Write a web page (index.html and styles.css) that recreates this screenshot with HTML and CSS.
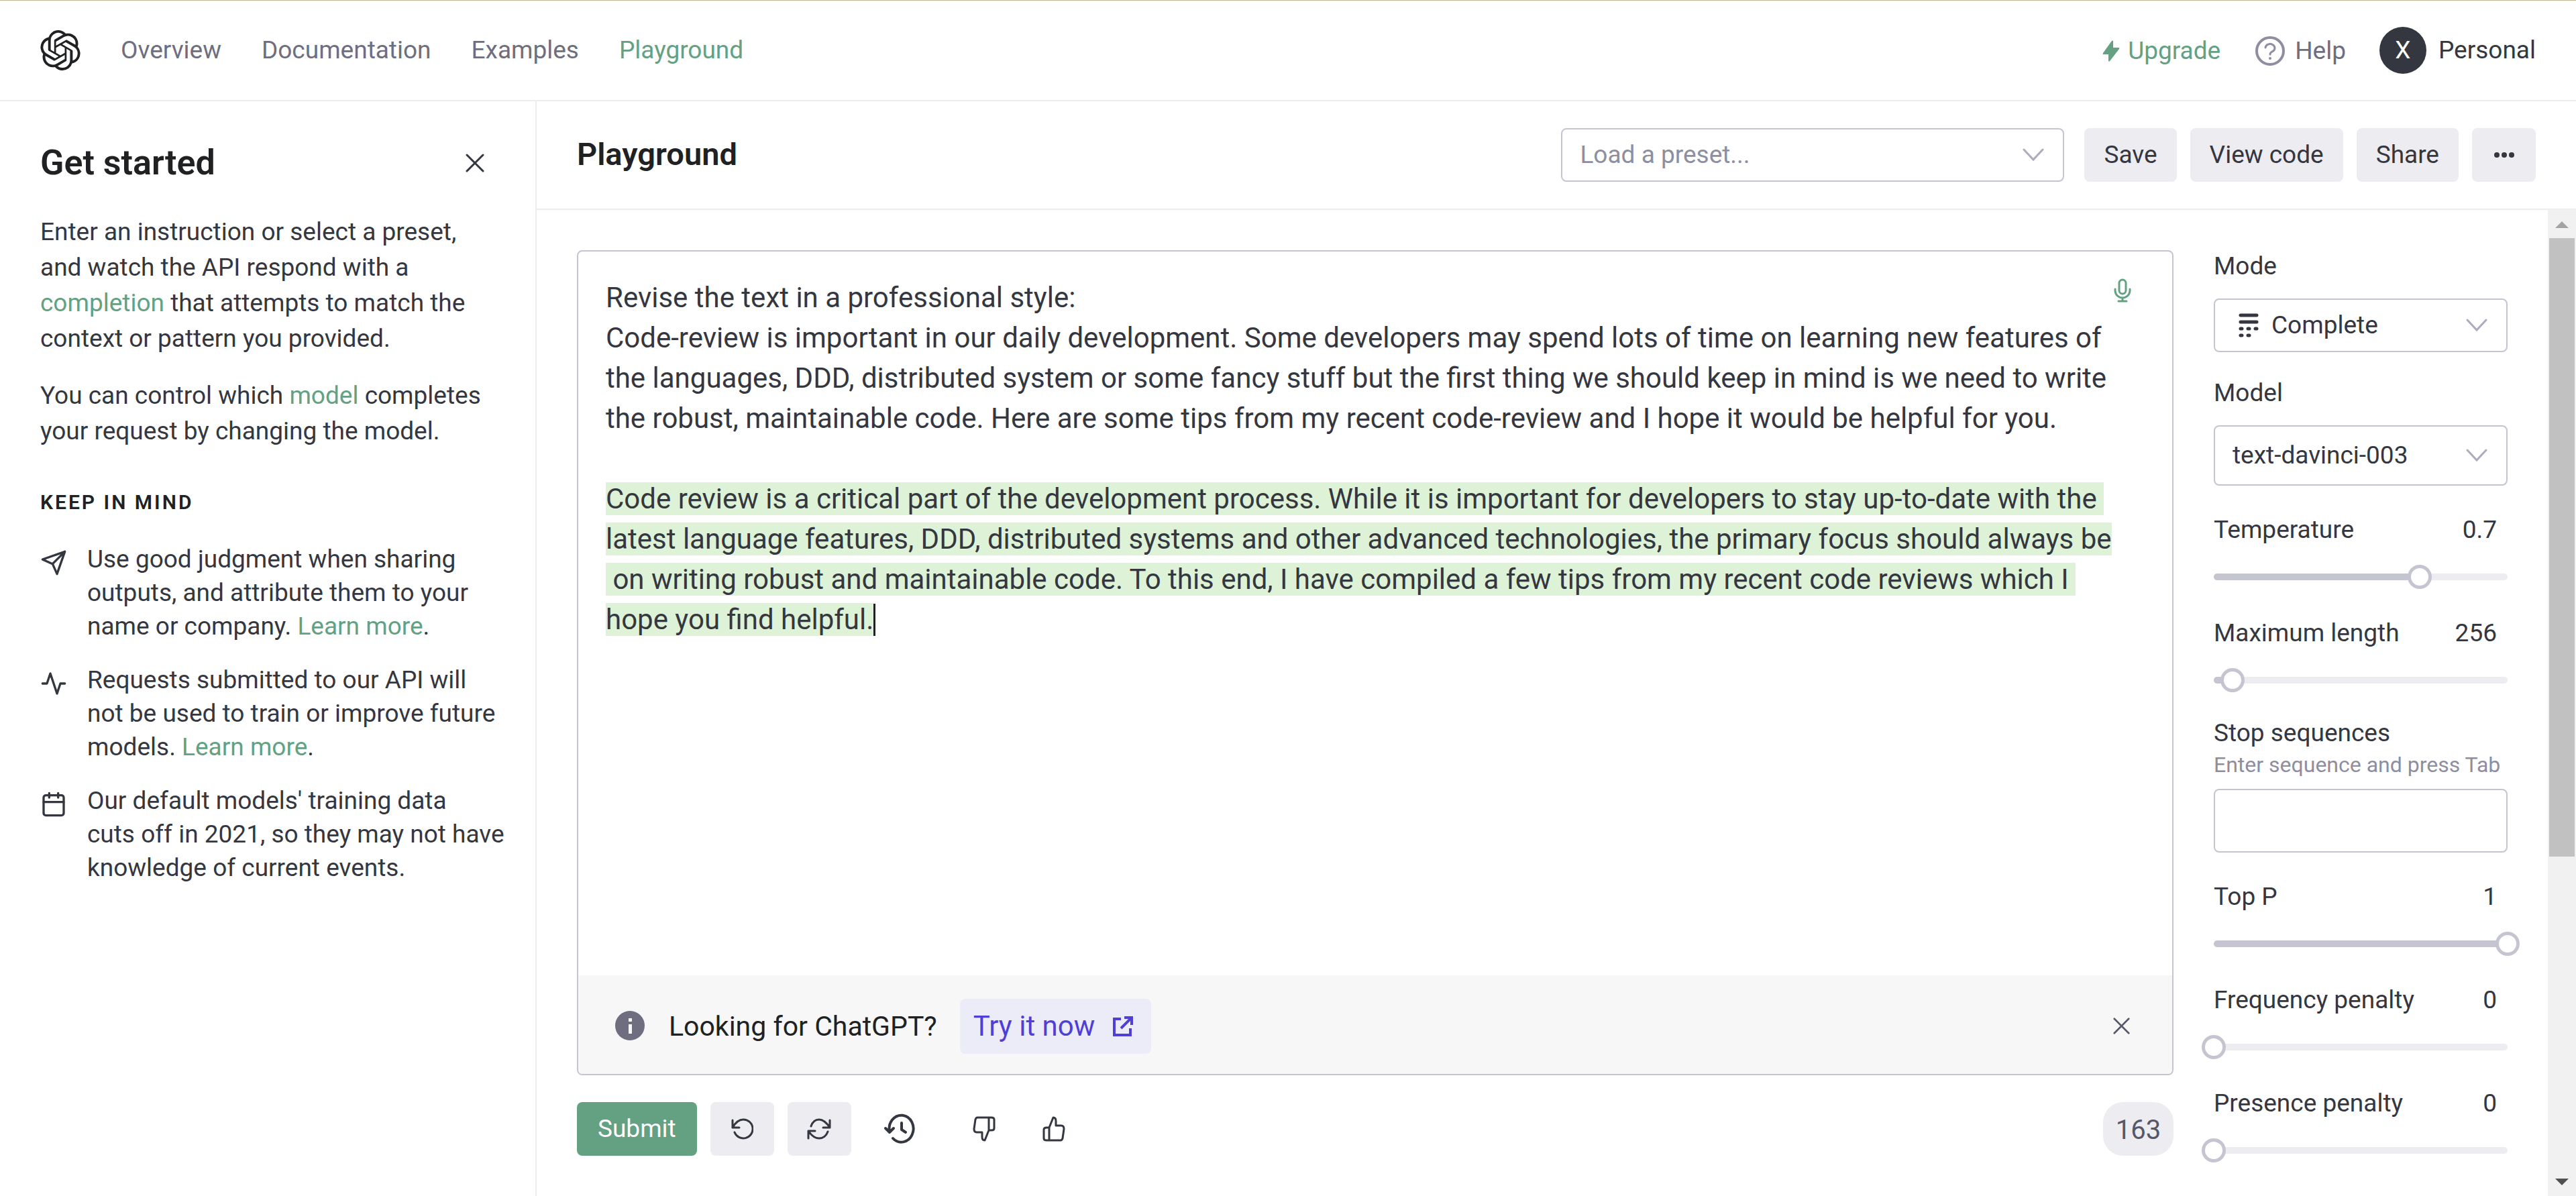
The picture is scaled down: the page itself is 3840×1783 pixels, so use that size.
FILE: index.html
```html
<!DOCTYPE html>
<html lang="en">
<head>
<meta charset="utf-8">
<title>Playground</title>
<link rel="stylesheet" href="styles.css">
</head>
<body>
<div class="app">
  <header class="topbar">
    <a class="logo" href="#" aria-label="Home"><svg viewBox="0 0 24 24" fill="currentColor"><path d="M22.2819 9.8211a5.9847 5.9847 0 0 0-.5157-4.9108 6.0462 6.0462 0 0 0-6.5098-2.9A6.0651 6.0651 0 0 0 4.9807 4.1818a5.9847 5.9847 0 0 0-3.9977 2.9 6.0462 6.0462 0 0 0 .7427 7.0966 5.98 5.98 0 0 0 .511 4.9107 6.051 6.051 0 0 0 6.5146 2.9001A5.9847 5.9847 0 0 0 13.2599 24a6.0557 6.0557 0 0 0 5.7718-4.2058 5.9894 5.9894 0 0 0 3.9977-2.9001 6.0557 6.0557 0 0 0-.7475-7.0729zm-9.022 12.6081a4.4755 4.4755 0 0 1-2.8764-1.0408l.1419-.0804 4.7783-2.7582a.7948.7948 0 0 0 .3927-.6813v-6.7369l2.02 1.1686a.071.071 0 0 1 .038.052v5.5826a4.504 4.504 0 0 1-4.4945 4.4944zm-9.6607-4.1254a4.4708 4.4708 0 0 1-.5346-3.0137l.142.0852 4.783 2.7582a.7712.7712 0 0 0 .7806 0l5.8428-3.3685v2.3324a.0804.0804 0 0 1-.0332.0615L9.74 19.9502a4.4992 4.4992 0 0 1-6.1408-1.6464zM2.3408 7.8956a4.485 4.485 0 0 1 2.3655-1.9728V11.6a.7664.7664 0 0 0 .3879.6765l5.8144 3.3543-2.0201 1.1685a.0757.0757 0 0 1-.071 0l-4.8303-2.7865A4.504 4.504 0 0 1 2.3408 7.872zm16.5963 3.8558L13.1038 8.364 15.1192 7.2a.0757.0757 0 0 1 .071 0l4.8303 2.7913a4.4944 4.4944 0 0 1-.6765 8.1042v-5.6772a.79.79 0 0 0-.407-.667zm2.0107-3.0231l-.142-.0852-4.7735-2.7818a.7759.7759 0 0 0-.7854 0L9.409 9.2297V6.8974a.0662.0662 0 0 1 .0284-.0615l4.8303-2.7866a4.4992 4.4992 0 0 1 6.6802 4.66zM8.3065 12.863l-2.02-1.1638a.0804.0804 0 0 1-.038-.0567V6.0742a4.4992 4.4992 0 0 1 7.3757-3.4537l-.142.0805L8.704 5.459a.7948.7948 0 0 0-.3927.6813zm1.0976-2.3654l2.602-1.4998 2.6069 1.4998v2.9994l-2.5974 1.4997-2.6067-1.4997Z"/></svg></a>
    <nav class="nav">
      <a href="#">Overview</a>
      <a href="#">Documentation</a>
      <a href="#">Examples</a>
      <a class="active" href="#">Playground</a>
    </nav>
    <div class="account">
      <a class="upgrade" href="#"><svg viewBox="0 0 26 32" fill="currentColor"><path d="M14 1 1 19q-1 2 1 2h7v10q1 1 2 0L25 13q1-2-1-2h-8V1q-1-1-2 0z"/></svg>Upgrade</a>
      <a class="help" href="#"><svg viewBox="0 0 44 44" fill="none" stroke="currentColor" stroke-width="4" stroke-linecap="round"><circle cx="22" cy="22" r="20"/><path d="M15 17a7 6 0 1 1 10 6c-2 1-3 2-3 4" stroke-width="3"/><circle cx="22" cy="33" r="2" fill="currentColor" stroke="none"/></svg>Help</a>
      <button class="profile"><span class="avatar">X</span>Personal</button>
    </div>
  </header>

  <div class="workspace">
    <aside class="sidebar">
      <div class="sidebar-head">
        <h2>Get started</h2>
        <button class="plain" aria-label="Close"><svg class="close" viewBox="0 0 28 28"><path d="M2 2l24 24M26 2 2 26"/></svg></button>
      </div>
      <p>Enter an instruction or select a preset,<br>and watch the API respond with a<br><a href="#">completion</a> that attempts to match the<br>context or pattern you provided.</p>
      <p>You can control which <a href="#">model</a> completes<br>your request by changing the model.</p>
      <h3>KEEP IN MIND</h3>
      <ul class="tips">
        <li><svg class="feather" viewBox="0 0 24 24"><path d="M22 2 11 13M22 2l-7 20-4-9-9-4z"/></svg><span>Use good judgment when sharing<br>outputs, and attribute them to your<br>name or company. <a href="#">Learn more</a>.</span></li>
        <li><svg class="feather" viewBox="0 0 24 24"><path d="M22 12h-4l-3 9L9 3l-3 9H2"/></svg><span>Requests submitted to our API will<br>not be used to train or improve future<br>models. <a href="#">Learn more</a>.</span></li>
        <li><svg class="feather" viewBox="0 0 24 24"><rect x="3" y="4" width="18" height="18" rx="2"/><path d="M16 2v4M8 2v4M3 10h18"/></svg><span>Our default models' training data<br>cuts off in 2021, so they may not have<br>knowledge of current events.</span></li>
      </ul>
    </aside>

    <main class="main">
      <div class="toolbar">
        <h1>Playground</h1>
        <div class="select preset">
          <select aria-label="Preset"><option>Load a preset...</option></select>
          <svg class="chevron" viewBox="0 0 32 20"><path d="M2 2l14 15L30 2"/></svg>
        </div>
        <div class="actions">
          <button class="btn">Save</button>
          <button class="btn">View code</button>
          <button class="btn">Share</button>
          <button class="btn icon-btn" aria-label="More"><svg width="30" height="8" viewBox="0 0 30 8" fill="currentColor"><circle cx="4" cy="4" r="4"/><circle cx="15" cy="4" r="4"/><circle cx="26" cy="4" r="4"/></svg></button>
        </div>
      </div>

      <div class="body">
        <div class="content">
          <section class="left">
            <div class="editor">
              <div class="prompt" role="textbox" aria-multiline="true" aria-label="Prompt">Revise the text in a professional style:
Code-review is important in our daily development. Some developers may spend lots of time on learning new features of
the languages, DDD, distributed system or some fancy stuff but the first thing we should keep in mind is we need to write
the robust, maintainable code. Here are some tips from my recent code-review and I hope it would be helpful for you.

<mark>Code review is a critical part of the development process. While it is important for developers to stay up-to-date with the 
latest language features, DDD, distributed systems and other advanced technologies, the primary focus should always be
 on writing robust and maintainable code. To this end, I have compiled a few tips from my recent code reviews which I 
hope you find helpful.</mark><span class="caret"></span></div>
              <button class="plain mic" aria-label="Record"><svg width="26" height="36" viewBox="0 0 26 36" fill="none" stroke="currentColor" stroke-width="3" stroke-linecap="round"><rect x="8" y="2" width="10" height="21" rx="5"/><path d="M2 16v2a11 11 0 0 0 22 0v-2M13 29v5M7 34h12"/></svg></button>
              <div class="banner">
                <svg class="info" viewBox="0 0 45 45"><circle cx="22" cy="22" r="22" fill="#6e6e80"/><path d="M20 20h5v14h-5zM20 11h5v5h-5z" fill="#f7f7f8"/></svg>
                <span class="banner-text">Looking for ChatGPT?</span>
                <a class="try" href="#">Try it now <svg width="32" height="32" viewBox="0 0 32 32" fill="none" stroke="currentColor" stroke-width="4"><path d="M13 5H3v24h24V19M18 3h11v11M28 4 13 19"/></svg></a>
                <button class="plain dismiss" aria-label="Dismiss"><svg class="close" viewBox="0 0 28 28"><path d="M2 2l24 24M26 2 2 26"/></svg></button>
              </div>
            </div>
            <div class="footer">
              <button class="btn submit">Submit</button>
              <button class="btn icon-btn" aria-label="Undo"><svg class="line" width="34" height="34" viewBox="0 0 34 34"><path d="M3 4v11h10M3 15C7 8 12 3 19 3a14 14 0 1 1-13 19"/></svg></button>
              <button class="btn icon-btn" aria-label="Regenerate"><svg class="line" width="36" height="34" viewBox="0 0 36 34"><path d="M34 4v11H24M2 31V20h10M6 13C8 7 12 3 18 3c7 0 12 6 16 12M31 21c-2 6-7 10-13 10-7 0-12-5-16-11"/></svg></button>
              <button class="plain history" aria-label="History"><svg class="line bold" width="46" height="46" viewBox="0 0 46 46"><path d="M2 22l6 6 6-6M8 27A18 20 0 1 1 13 37M26 14v10l6 4"/></svg></button>
              <button class="plain thumb-down" aria-label="Bad"><svg class="line" width="34" height="38" viewBox="0 0 34 38"><path d="M24 2H7Q5 2 4 5L2 19q0 5 4 5h8v7q0 5 4 5l6-15zM24 2h4q4 0 4 3v13q0 3-4 3h-4"/></svg></button>
              <button class="plain" aria-label="Good"><svg class="line" width="34" height="38" viewBox="0 0 34 38"><path d="M10 36h17q2 0 3-3l2-14q0-5-4-5h-8V7q0-5-4-5l-6 15zM10 36H6q-4 0-4-3V20q0-3 4-3h4"/></svg></button>
              <span class="count">163</span>
            </div>
          </section>

          <form class="settings">
            <div class="control">
              <label for="mode">Mode</label>
              <div class="select mode">
                <select id="mode"><option>Complete</option></select>
                <svg class="mode-icon" viewBox="0 0 30 36" fill="none" stroke="currentColor" stroke-width="5" stroke-linecap="round"><path d="M3 3h24M3 13h24M3 23h2M14 23h2M25 23h2M3 33h2M14 33h2"/></svg>
                <svg class="chevron" viewBox="0 0 32 20"><path d="M2 2l14 15L30 2"/></svg>
              </div>
            </div>
            <div class="control">
              <label for="model">Model</label>
              <div class="select tall">
                <select id="model"><option>text-davinci-003</option></select>
                <svg class="chevron" viewBox="0 0 32 20"><path d="M2 2l14 15L30 2"/></svg>
              </div>
            </div>
            <div class="control ranged">
              <div class="row"><label for="temp">Temperature</label><output>0.7</output></div>
              <div class="slider"><span class="bar"><span class="fill" style="width:70%"></span></span><input id="temp" type="range" min="0" max="1" step="0.01" value="0.7"></div>
            </div>
            <div class="control ranged">
              <div class="row"><label for="len">Maximum length</label><output>256</output></div>
              <div class="slider"><span class="bar"><span class="fill" style="width:6.4%"></span></span><input id="len" type="range" min="0" max="4000" value="256"></div>
            </div>
            <div class="control">
              <label for="stop">Stop sequences</label>
              <div class="hint">Enter sequence and press Tab</div>
              <input class="text" id="stop" type="text">
            </div>
            <div class="control ranged">
              <div class="row"><label for="topp">Top P</label><output>1</output></div>
              <div class="slider"><span class="bar"><span class="fill" style="width:100%"></span></span><input id="topp" type="range" min="0" max="1" step="0.01" value="1"></div>
            </div>
            <div class="control ranged">
              <div class="row"><label for="freq">Frequency penalty</label><output>0</output></div>
              <div class="slider"><span class="bar"><span class="fill" style="width:0%"></span></span><input id="freq" type="range" min="0" max="2" step="0.01" value="0"></div>
            </div>
            <div class="control ranged">
              <div class="row"><label for="pres">Presence penalty</label><output>0</output></div>
              <div class="slider"><span class="bar"><span class="fill" style="width:0%"></span></span><input id="pres" type="range" min="0" max="2" step="0.01" value="0"></div>
            </div>
          </form>
        </div>
        <div class="scrollbar" aria-hidden="true">
          <svg class="arrow" viewBox="0 0 20 10" fill="#a3a3a3"><path d="M0 10 10 0l10 10z"/></svg>
          <div class="rail"><div class="grip"></div></div>
          <svg class="arrow" viewBox="0 0 20 10" fill="#505050"><path d="M0 0l10 10L20 0z"/></svg>
        </div>
      </div>
    </main>
  </div>
</div>
</body>
</html>
```

FILE: styles.css
```css
* { box-sizing: border-box; }

:root {
  --text: #353740;
  --heading: #202123;
  --muted: #6e6e80;
  --soft: #8e8ea0;
  --border: #c5c5d2;
  --line: #ececf1;
  --green: #63a182;
}

body {
  margin: 0;
  background: #fff;
  color: var(--text);
  font: 37px/50px Roboto, "Liberation Sans", sans-serif;
}

a { color: var(--green); text-decoration: none; }
button, select, input { font: inherit; color: inherit; margin: 0; }
button { cursor: pointer; border: 0; padding: 0; background: none; }
svg { display: block; flex: none; }
h1, h2, h3, p, ul { margin: 0; padding: 0; }

.app { display: flex; flex-direction: column; height: 100vh; border-top: 1px solid #c5b495; }

.topbar { display: flex; align-items: center; height: 150px; flex: none; padding: 0 60px; border-bottom: 2px solid var(--line); }
.logo { color: var(--heading); margin-right: 60px; }
.logo svg { width: 60px; height: 60px; }
.nav { display: flex; gap: 60px; }
.nav a { color: var(--muted); }
.nav .active { color: var(--green); }
.account { display: flex; align-items: center; margin-left: auto; }
.upgrade, .help, .profile { display: flex; align-items: center; }
.upgrade { gap: 12px; margin-right: 52px; padding-top: 2px; }
.upgrade svg { width: 26px; height: 32px; }
.help { gap: 15px; margin-right: 50px; padding-top: 2px; color: var(--muted); }
.help svg { width: 44px; height: 44px; color: var(--soft); }
.profile { gap: 18px; }
.avatar { width: 70px; height: 70px; border-radius: 50%; background: #353740; color: #fff; line-height: 70px; text-align: center; }

.workspace { display: flex; flex: 1; min-height: 0; }

.sidebar { width: 800px; flex: none; padding: 60px 60px 0; border-right: 2px solid var(--line); }
.sidebar-head { display: flex; align-items: center; justify-content: space-between; margin-bottom: 44px; padding-right: 16px; }
h1, h2, h3 { color: var(--heading); font-weight: 600; }
h2 { font-size: 52px; line-height: 64px; }
h1 { font-size: 47px; line-height: 60px; padding-bottom: 2px; }
h3 { font-size: 30px; line-height: 40px; letter-spacing: 3px; margin: 60px 0 40px; }
.sidebar p { line-height: 53px; margin-bottom: 32px; }
.tips { list-style: none; display: grid; gap: 30px; white-space: nowrap; }
.tips li { display: flex; gap: 30px; }
.feather { width: 40px; height: 40px; margin-top: 10px; fill: none; stroke: currentColor; stroke-width: 2; stroke-linecap: round; stroke-linejoin: round; }
.close { width: 28px; height: 28px; fill: none; stroke: currentColor; stroke-width: 3; stroke-linecap: round; }

.main { flex: 1; min-width: 0; display: flex; flex-direction: column; }
.toolbar { display: flex; align-items: center; height: 162px; flex: none; padding: 0 60px; border-bottom: 2px solid var(--line); }
.actions { display: flex; gap: 20px; margin-left: 30px; }
.btn { height: 80px; padding: 0 29px; border-radius: 8px; background: var(--line); }
.icon-btn { width: 95px; padding: 0; display: flex; align-items: center; justify-content: center; }

.select { display: grid; align-items: center; height: 80px; }
.select > * { grid-area: 1 / 1; }
.select select, .text { width: 100%; height: 100%; border: 2px solid var(--border); border-radius: 8px; background: #fff; appearance: none; padding: 0 26px; }
.preset { width: 750px; margin-left: auto; }
.preset select { color: var(--soft); }
.chevron { width: 32px; height: 20px; justify-self: end; margin-right: 30px; fill: none; stroke: #acacbe; stroke-width: 3; stroke-linecap: round; pointer-events: none; }
.tall { height: 90px; }
.mode select { padding-left: 84px; }
.mode-icon { width: 30px; height: 36px; margin-left: 37px; pointer-events: none; }

.body { display: flex; flex: 1; min-height: 0; }
.content { flex: 1; min-width: 0; display: flex; gap: 60px; padding: 60px; overflow: hidden; }
.left { flex: 1; min-width: 0; display: flex; flex-direction: column; gap: 40px; }
.editor { flex: 1; position: relative; display: flex; flex-direction: column; border: 2px solid var(--border); border-radius: 8px; overflow: hidden; }
.prompt { flex: 1; padding: 39px 41px; font-size: 42px; line-height: 60px; white-space: pre; }
mark { background: #ddf2d6; color: inherit; }
.caret { display: inline-block; width: 3px; height: 48px; background: var(--heading); vertical-align: -10px; }
.mic { position: absolute; top: 40px; right: 61px; color: var(--green); }

.banner { display: flex; align-items: center; height: 147px; padding: 4px 63px 0 55px; background: #f7f7f8; color: var(--heading); font-size: 42px; }
.info { width: 45px; height: 45px; }
.banner-text { margin: 0 34px 0 35px; font-size: 41px; }
.try { display: flex; align-items: center; gap: 26px; height: 82px; padding: 0 26px 0 20px; border-radius: 8px; background: #ececf8; color: #4f3fd6; }
.dismiss { margin-left: auto; color: #565869; }
.dismiss .close { width: 25px; height: 25px; }

.footer { display: flex; align-items: center; gap: 20px; flex: none; }
.submit { padding: 0 31px; background: var(--green); color: #fff; }
.line { fill: none; stroke: currentColor; stroke-width: 3; stroke-linecap: round; stroke-linejoin: round; }
.bold { stroke-width: 4; }
.history { margin-left: 29px; }
.thumb-down { margin: 0 50px 0 66px; }
.count { margin-left: auto; width: 105px; height: 80px; border-radius: 30px; background: var(--line); color: #565869; font-size: 40px; line-height: 84px; text-align: center; }

.settings { width: 438px; flex: none; padding-top: 3px; }
.control { margin-top: 40px; }
.control:first-child { margin-top: 0; }
.ranged { margin-top: 45px; }
.control label, .row output { display: block; line-height: 42px; }
.control .select { margin-top: 27px; }
.row { display: flex; justify-content: space-between; margin-bottom: 31px; padding-right: 16px; }
.hint { color: var(--soft); font-size: 32px; line-height: 52px; }
.text { display: block; height: 95px; margin-top: 10px; }
.control .text { height: 95px; }
.slider { display: grid; align-items: center; height: 36px; }
.slider > * { grid-area: 1 / 1; }
.bar { height: 10px; border-radius: 5px; background: var(--line); overflow: hidden; }
.fill { display: block; height: 10px; background: var(--border); }
.slider input { appearance: none; background: none; width: calc(100% + 36px); height: 36px; margin-left: -18px; }
.slider input::-webkit-slider-thumb { appearance: none; width: 36px; height: 36px; border: 5px solid var(--border); border-radius: 50%; background: #fff; }

.scrollbar { width: 42px; flex: none; display: flex; flex-direction: column; align-items: center; justify-content: space-between; padding: 17px 2px 16px; background: #f1f1f1; }
.arrow { width: 20px; height: 10px; }
.rail { flex: 1; align-self: stretch; margin: 15px 0; }
.grip { height: 66.5%; background: #c1c1c1; }
```
